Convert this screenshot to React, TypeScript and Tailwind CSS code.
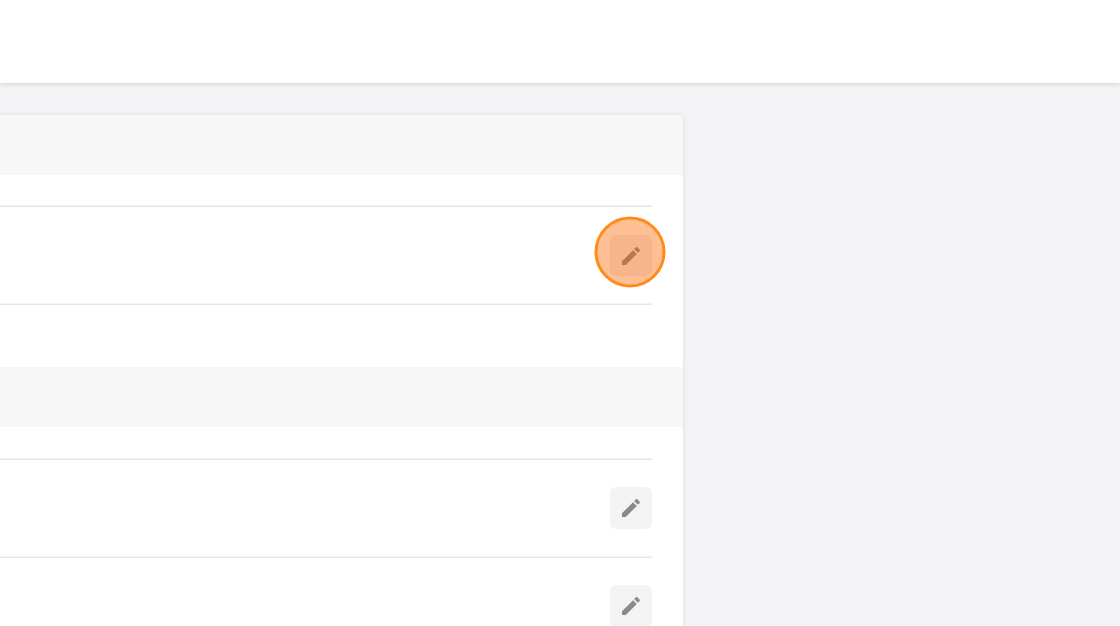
import React from "react";
import { MdEdit } from "react-icons/md";

const SectionHeader: React.FC = () => <div className="h-[60px] bg-[#f7f7f7]" />;

const Rule: React.FC = () => (
  <div className="h-[2px] border-y border-t-[#f4f4f4] border-b-[#e5e5e5]" />
);

const EditButton: React.FC = () => (
  <button className="flex h-[42px] w-[42px] items-center justify-center rounded-[6px] bg-[#f3f3f5] text-[#8a8a8a]">
    <MdEdit size={24} />
  </button>
);

const App: React.FC = () => {
  return (
    <div className="relative h-[626px] w-[1120px] overflow-hidden bg-[#f3f3f5] font-['Liberation_Sans',sans-serif]">
      <header className="h-[83px] bg-white shadow-[0_1px_4px_rgba(0,0,0,0.14)]" />
      <main className="pt-[32px]">
        <div className="w-[683px] overflow-hidden rounded-tr-[5px] bg-white shadow-[0_0_4px_rgba(0,0,0,0.1)]">
          <SectionHeader />
          <div className="mr-[31px] pt-[30px] pb-[62px]">
            <Rule />
            <div className="flex h-[96px] justify-end pt-[28px]">
              {/* sits under the marker, tones come out darker there */}
              <button className="flex h-[41px] w-[42px] items-center justify-center rounded-[6px] bg-[#ecebed] text-[#707070]">
                <MdEdit size={24} />
              </button>
            </div>
            <Rule />
          </div>
          <SectionHeader />
          <div className="mr-[31px] pt-[31px]">
            <Rule />
            <div className="flex h-[96px] justify-end pt-[27px]">
              <EditButton />
            </div>
            <Rule />
            <div className="flex h-[96px] justify-end pt-[27px]">
              <EditButton />
            </div>
          </div>
        </div>
      </main>
      {/* highlight marker over the first edit button */}
      <div className="absolute left-[595px] top-[217px] h-[71px] w-[71px] translate-x-[-0.5px] translate-y-[-0.5px] rounded-full border-[3px] border-[#ff8c1a] bg-[#ff7f2a]/50" />
    </div>
  );
};

export default App;
